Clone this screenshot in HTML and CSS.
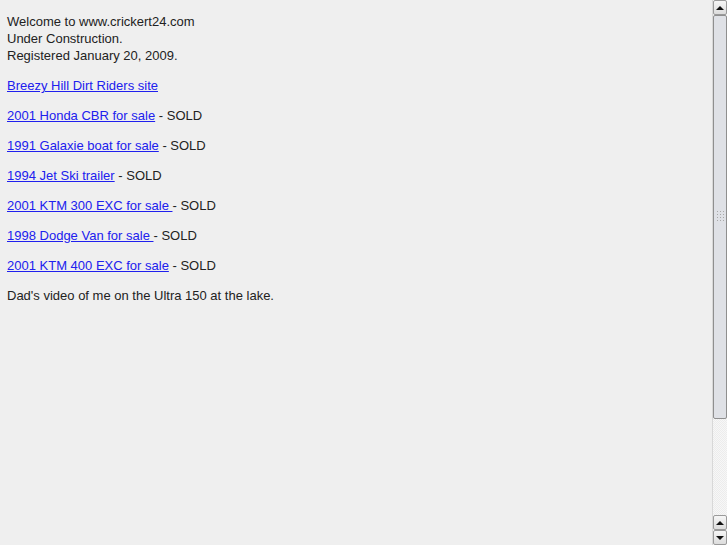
FILE: index.html
```html
<!DOCTYPE html>
<html>
<head>
<meta charset="utf-8">
<title>crickert24</title>
<link rel="stylesheet" href="styles.css">
</head>
<body>
<div class="page">
  <div class="intro">Welcome to www.crickert24.com<br>Under Construction.<br>Registered January 20, 2009.</div>
  <p><a href="#">Breezy Hill Dirt Riders site</a></p>
  <p><a href="#">2001 Honda CBR for sale</a> - SOLD</p>
  <p><a href="#">1991 Galaxie boat for sale</a> - SOLD</p>
  <p><a href="#">1994 Jet Ski trailer</a> - SOLD</p>
  <p><a href="#">2001 KTM 300 EXC for sale </a> - SOLD</p>
  <p><a href="#">1998 Dodge Van for sale </a> - SOLD</p>
  <p><a href="#">2001 KTM 400 EXC for sale</a> - SOLD</p>
  <p>Dad's video of me on the Ultra 150 at the lake.</p>
</div>
<div class="scrollbar">
  <div class="sb-btn"><span class="arrow up"></span></div>
  <div class="sb-track">
    <div class="sb-thumb"><span class="grip"></span></div>
  </div>
  <div class="sb-btn"><span class="arrow up"></span></div>
  <div class="sb-btn"><span class="arrow down"></span></div>
</div>
</body>
</html>
```
FILE: styles.css
```css
html, body {
  margin: 0;
  padding: 0;
  background: #efefef;
  overflow: hidden;
}
body {
  font-family: "Liberation Sans", Arial, sans-serif;
  font-size: 13px;
  line-height: 17px;
  color: #222;
}
.page {
  padding: 13px 15px 8px 7px;
}
.intro {
  margin: 0;
}
p {
  margin: 13px 0 0 0;
}
a {
  color: #2020ee;
  text-decoration: underline;
}
.scrollbar {
  position: fixed;
  top: 0;
  right: 0;
  width: 15px;
  height: 545px;
  display: flex;
  flex-direction: column;
  background: #f4f4f4;
  border-left: 1px solid #d8d8d8;
  box-sizing: border-box;
}
.sb-btn {
  height: 15px;
  flex: none;
  box-sizing: border-box;
  border: 1px solid #9a9a9a;
  border-radius: 2px;
  background: linear-gradient(#f6f6f6, #dcdcdc);
  display: flex;
  align-items: center;
  justify-content: center;
}
.arrow {
  width: 0;
  height: 0;
  border-left: 4px solid transparent;
  border-right: 4px solid transparent;
}
.arrow.up {
  border-bottom: 4px solid #111;
}
.arrow.down {
  border-top: 4px solid #111;
}
.sb-track {
  flex: 1;
  background: repeating-conic-gradient(#f7f7f7 0 25%, #ececec 0 50%) 0 0 / 2px 2px;
  display: flex;
  flex-direction: column;
}
.sb-thumb {
  height: 404px;
  box-sizing: border-box;
  border: 1px solid #8f8f8f;
  border-radius: 2px;
  background: #dfe1e6;
  display: flex;
  align-items: center;
  justify-content: center;
}
.grip {
  width: 7px;
  height: 12px;
  background: repeating-linear-gradient(#a8a8a8 0 1px, transparent 1px 3px);
  -webkit-mask: repeating-linear-gradient(90deg, #000 0 1px, transparent 1px 3px);
  mask: repeating-linear-gradient(90deg, #000 0 1px, transparent 1px 3px);
}
```
